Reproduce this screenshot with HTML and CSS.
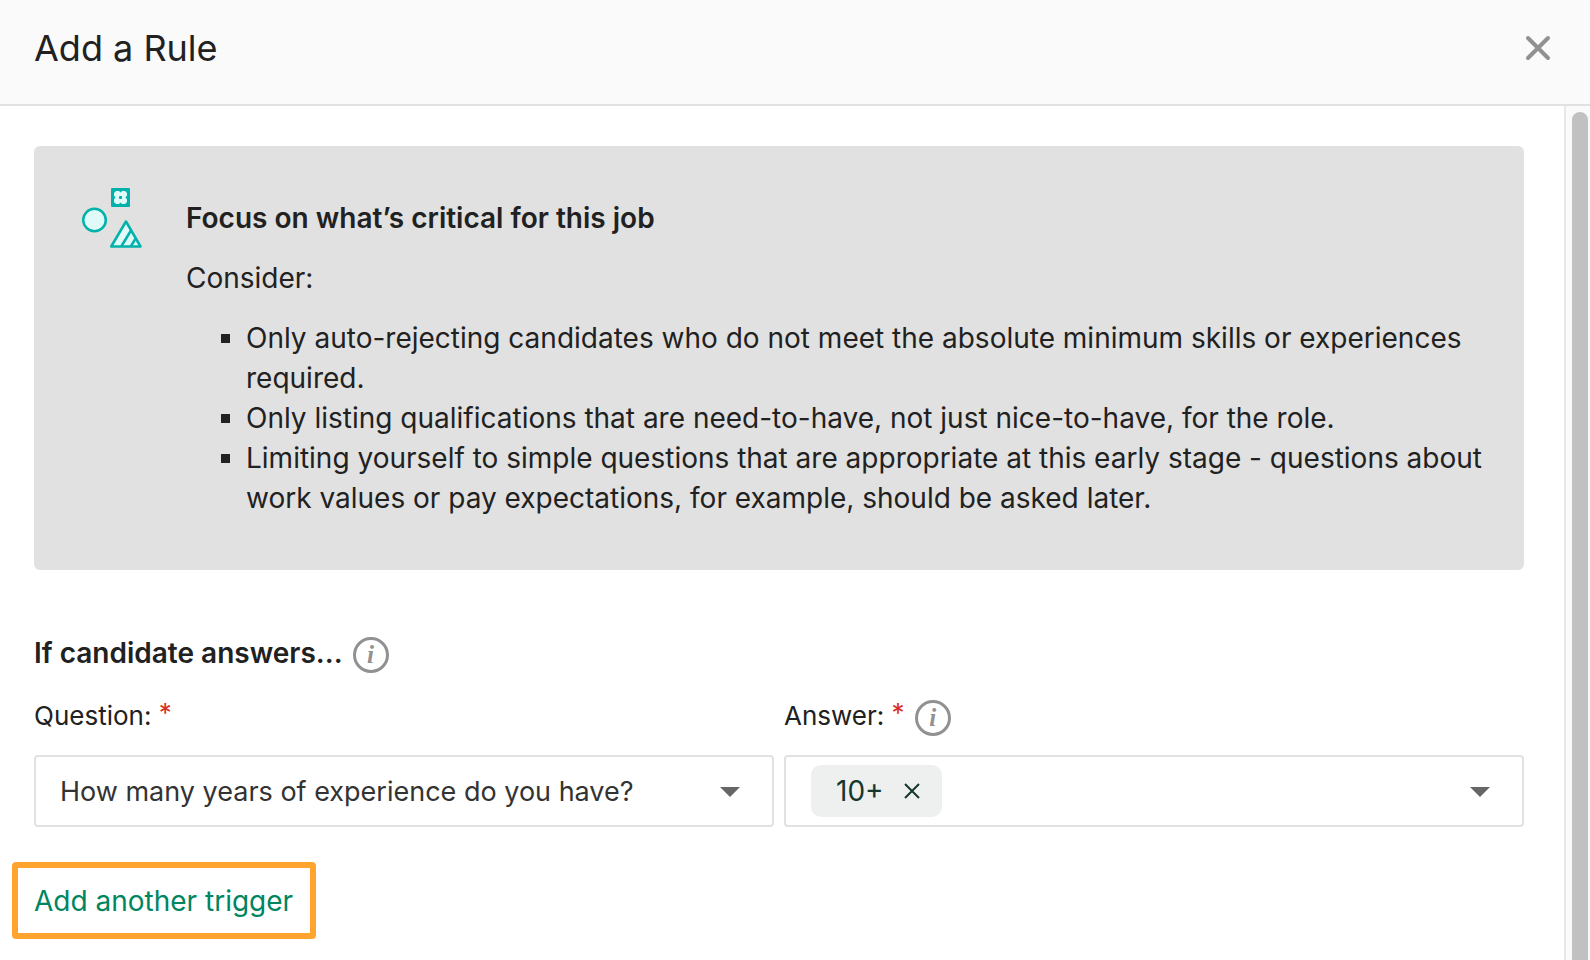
FILE: index.html
```html
<!DOCTYPE html>
<html lang="en">
<head>
  <meta charset="UTF-8">
  <title>Add a Rule</title>
  <link rel="stylesheet" href="styles.css">
</head>
<body>

  <header class="modal-header">
    <h1>Add a Rule</h1>
    <button type="button" class="close-btn" aria-label="Close">
      <svg width="26" height="26" viewBox="0 0 26 26">
        <path d="M3 3 L23 23 M23 3 L3 23" />
      </svg>
    </button>
  </header>

  <div class="modal-body">
    <main class="content">

      <!-- Tips -->
      <section class="tips">
        <svg class="tips-icon" width="60" height="60" viewBox="0 0 60 60">
          <circle cx="12.5" cy="32" r="11.3" />
          <rect x="29" y="0" width="19" height="19" rx="1" class="solid" />
          <path class="clover" d="M34 3h3l1.500 1.500 1.500-1.500h3l2 2v2.500l-1.500 2 1.500 2v2.500l-2 2h-3l-1.500-1.500-1.500 1.500h-3l-2-2v-2.500l1.500-2-1.500-2V5z" />
          <rect x="37" y="8" width="3" height="3" rx="1" class="solid" />
          <path d="M44 33.500 L58.500 58.500 H29.200 Z" />
          <path d="M39.500 58 L49 42.500 M49 58 L54 50" />
        </svg>
        <div class="tips-text">
          <h2>Focus on what’s critical for this job</h2>
          <p>Consider:</p>
          <ul>
            <li>Only auto-rejecting candidates who do not meet the absolute minimum skills or experiences required.</li>
            <li>Only listing qualifications that are need-to-have, not just nice-to-have, for the role.</li>
            <li>Limiting yourself to simple questions that are appropriate at this early stage - questions about work values or pay expectations, for example, should be asked later.</li>
          </ul>
        </div>
      </section>

      <!-- Rule form -->
      <form class="rule-form">
        <div class="section-title">
          <h2>If candidate answers...</h2>
          <button type="button" class="info" aria-label="About candidate answers">i</button>
        </div>

        <div class="fields">
          <div class="field">
            <div class="field-label">
              <label for="question">Question: <span class="required">*</span></label>
            </div>
            <div class="control">
              <select id="question" name="question">
                <option>How many years of experience do you have?</option>
              </select>
              <svg class="arrow" width="20" height="10" viewBox="0 0 20 10"><path d="M0 0h20L10 10z" /></svg>
            </div>
          </div>

          <div class="field">
            <div class="field-label">
              <label for="answer">Answer: <span class="required">*</span></label>
              <button type="button" class="info" aria-label="About answers">i</button>
            </div>
            <div class="control multi">
              <span class="tag">
                10+
                <button type="button" aria-label="Remove 10+">
                  <svg width="16" height="16" viewBox="0 0 16 16"><path d="M1 1 L15 15 M15 1 L1 15" /></svg>
                </button>
              </span>
              <input type="text" id="answer" name="answer" autocomplete="off">
              <svg class="arrow" width="20" height="10" viewBox="0 0 20 10"><path d="M0 0h20L10 10z" /></svg>
            </div>
          </div>
        </div>

        <button type="button" class="add-trigger">Add another trigger</button>
      </form>
    </main>

    <div class="scrollbar">
      <div class="thumb"></div>
    </div>
  </div>

</body>
</html>
```

FILE: styles.css
```css
* {
  box-sizing: border-box;
}
body {
  font-family: Inter, "Liberation Sans", sans-serif;
  font-size: 28px;
  line-height: 40px;
  color: #212121;
  background-color: #fff;
  margin: 0;
  height: 100vh;
  display: flex;
  flex-direction: column;
  overflow: hidden;
}
h1, h2, p, ul {
  margin: 0;
}
h2 {
  font-size: 28px;
  font-weight: 600;
}
button {
  font: inherit;
  padding: 0;
  border: none;
  background: none;
  cursor: pointer;
}
svg {
  display: block;
}

/* header */
.modal-header {
  flex: none;
  display: flex;
  justify-content: space-between;
  align-items: center;
  padding: 24px 39px 32px 34px;
  background-color: #fafafa;
  border-bottom: 2px solid #e1e1e1;
}
.modal-header h1 {
  font-size: 36px;
  font-weight: 400;
  line-height: 48px;
}
.close-btn path {
  fill: none;
  stroke: #919191;
  stroke-width: 4;
  stroke-linecap: round;
}

/* body */
.modal-body {
  flex: 1;
  min-height: 0;
  display: flex;
}
.content {
  flex: 1;
  min-width: 0;
  padding: 40px 40px 0 34px;
}
.scrollbar {
  flex: none;
  width: 26px;
  padding: 6px 2px 0 6px;
  background-color: #fafafa;
  border-left: 2px solid #e8e8e8;
}
.thumb {
  height: 100%;
  background-color: #c1c1c1;
  border-radius: 8px 8px 0 0;
}

/* tips */
.tips {
  display: flex;
  gap: 44px;
  padding: 52px 32px 52px 48px;
  background-color: #e1e1e1;
  border-radius: 6px;
}
.tips-icon {
  flex: none;
  margin-top: -10px;
  fill: #e0fafa;
  stroke: #00b2a9;
  stroke-width: 2.5;
  stroke-linejoin: round;
}
.tips-icon .solid {
  fill: #00b2a9;
  stroke: none;
}
.tips-icon .clover {
  stroke: none;
}
.tips-text p {
  margin: 20px 0;
}
.tips-text ul {
  padding-left: 60px;
  list-style: square;
}

/* form */
.section-title {
  display: flex;
  align-items: flex-end;
  gap: 10px;
  margin-top: 63px;
}
.info {
  width: 36px;
  height: 36px;
  border: 3px solid #919191;
  border-radius: 50%;
  color: #919191;
  font: italic bold 25px/28px "Liberation Serif", serif;
}
.fields {
  display: grid;
  grid-template-columns: 1fr 1fr;
  gap: 10px;
  margin-top: 23px;
}
.field-label {
  display: flex;
  align-items: flex-end;
  gap: 10px;
  height: 40px;
  margin-bottom: 19px;
  font-size: 26px;
}
.required {
  color: #d93025;
  line-height: 20px;
  vertical-align: 3px;
}
.control {
  position: relative;
  height: 72px;
  border: 2px solid #e1e1e1;
  border-radius: 4px;
}
.control select {
  appearance: none;
  width: 100%;
  height: 100%;
  padding: 2px 60px 0 24px;
  border: none;
  background: none;
  color: #333;
  font: inherit;
  font-size: 27px;
}
.arrow {
  position: absolute;
  top: 30px;
  right: 32px;
  fill: #666;
  pointer-events: none;
}
.multi {
  display: flex;
  align-items: center;
  padding: 0 60px 0 25px;
}
.tag {
  display: flex;
  align-items: center;
  gap: 20px;
  height: 52px;
  padding: 0 22px 0 25px;
  background-color: #eef0f0;
  border-radius: 10px;
  color: #15372c;
}
.tag path {
  stroke: #15372c;
  stroke-width: 2;
}
.multi input {
  flex: 1;
  min-width: 0;
  height: 100%;
  border: none;
  outline: none;
  background: none;
  font: inherit;
}
.add-trigger {
  margin: 35px 0 0 -22px;
  padding: 13px 17px 12px 16px;
  border: 6px solid #ffa42e;
  border-radius: 4px;
  color: #008561;
}
```
